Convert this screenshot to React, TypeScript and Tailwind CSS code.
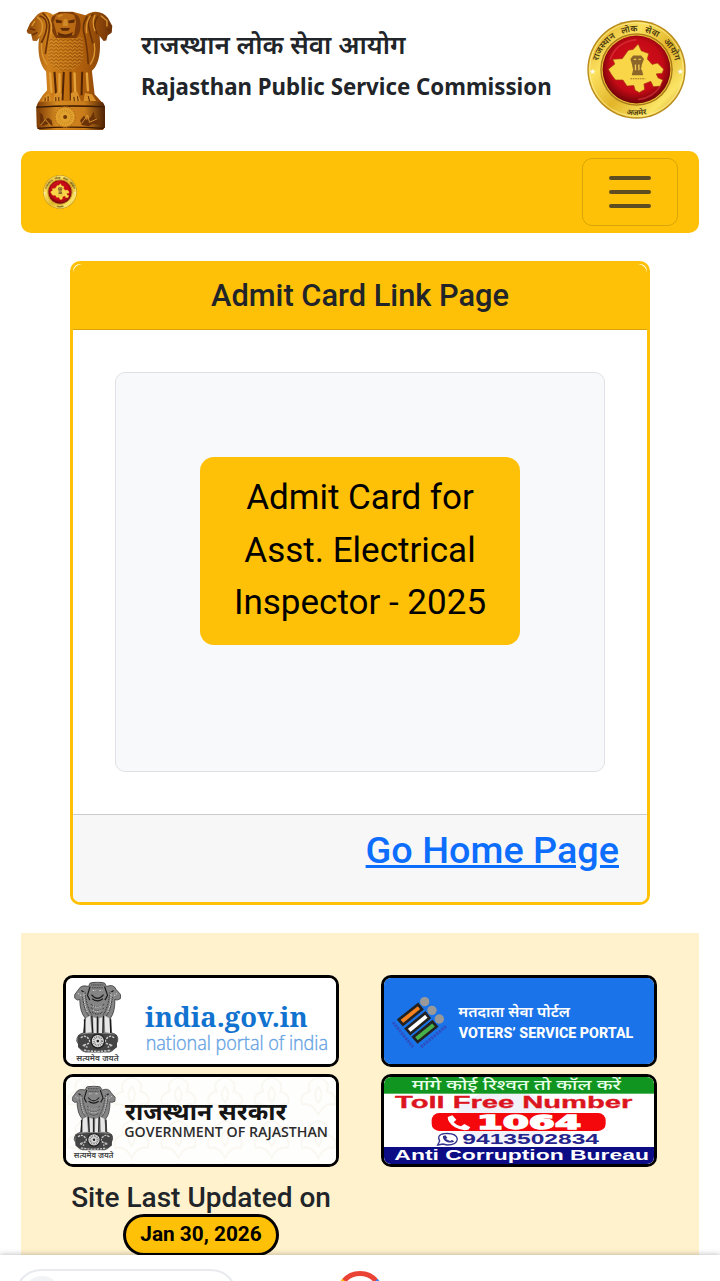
import React, { useState } from "react";

const sansHindi = "Noto Sans, Noto Sans Devanagari, sans-serif";

function GoldEmblem() {
  return (
    <svg viewBox="50 30 260 362" className="h-[121px] w-[87px]">
      <defs>
        <linearGradient id="gold" x1="0" x2="1">
          <stop offset="0" stopColor="#8a4508" />
          <stop offset=".25" stopColor="#d0811c" />
          <stop offset=".45" stopColor="#c2700f" />
          <stop offset=".7" stopColor="#a8590b" />
          <stop offset="1" stopColor="#6e3206" />
        </linearGradient>
        <linearGradient id="goldBase" x1="0" x2="1">
          <stop offset="0" stopColor="#7a3a07" />
          <stop offset=".3" stopColor="#d58a20" />
          <stop offset=".7" stopColor="#c97c1a" />
          <stop offset="1" stopColor="#4c2105" />
        </linearGradient>
        <pattern id="fur" width="14" height="10" patternUnits="userSpaceOnUse">
          <path d="M0 2L7 8L14 2" fill="none" stroke="#e8a53a" strokeWidth="2" />
          <path d="M0 6L7 12L14 6M0 -4L7 2L14 -4" fill="none" stroke="#6b3205" strokeWidth="1.6" />
        </pattern>
      </defs>
      <path
        fill="url(#gold)"
        d="M80 48L62 70 52 92 55 100 65 102 70 122 82 123 90 112C84 140 86 190 110 214L113 270 100 285 88 304 81 320 83 382 90 389 280 389 286 380 286 320 277 306 255 282 247 212C270 192 274 150 270 108L282 123 290 121 294 106 306 98 308 78 295 54C278 32 250 29 228 46L190 35 150 35 130 44C110 30 90 35 80 48Z"
      />
      <path fill="url(#fur)" d="M120 112C135 105 150 118 170 118 190 118 205 105 220 112L222 175C210 200 190 212 168 212 148 212 128 205 116 180Z" />
      <path fill="#7b3a07" d="M128 50C120 65 126 100 140 114L200 114C215 98 218 65 206 48L190 36 150 36Z" />
      <path fill="#b96a13" d="M140 44Q166 34 194 44L200 66 194 104 168 114 142 104 132 66Z" />
      <path fill="#5e2b06" d="M138 58L158 62 156 70 140 68ZM176 62L196 58 194 68 178 70ZM152 84L182 84 176 92 158 92ZM144 96Q168 110 190 96L186 108 168 114 148 108Z" />
      <path fill="#d08a28" d="M163 58L173 58 176 78 160 78ZM145 46L160 42 160 48 146 52Z" />
      <path fill="none" stroke="#6d3306" strokeWidth="5" strokeLinecap="round" d="M92 48Q112 55 112 76T96 128M101 40Q125 58 119 92T108 160M232 50Q216 75 224 102T236 190M250 42Q232 58 238 84T250 130M264 50Q248 72 262 100M64 86L76 90M70 104L82 98M292 88L304 92" />
      <path fill="none" stroke="#dc9631" strokeWidth="4" strokeLinecap="round" d="M84 52Q100 62 99 82T88 108M112 44Q132 66 125 102M96 130Q94 165 112 192M242 48Q228 68 231 98M256 46Q246 66 256 92M254 130Q260 165 243 192M275 48L292 62 292 78M68 76L76 64" />
      <path fill="none" stroke="#522405" strokeWidth="6" d="M135 215L140 285M163 215L159 300M183 215L184 300M218 215L216 285" />
      <path fill="none" stroke="#e5a23a" strokeWidth="7" strokeLinecap="round" d="M122 220L126 275M150 222L150 275M195 220L197 275M232 220L235 270" />
      <path fill="#db9129" d="M131 302Q132 278 145 276L157 280 155 304ZM184 304L184 278 203 274 214 302ZM98 302Q102 286 120 280L125 303ZM222 302L226 278 247 282 260 302Z" />
      <path fill="none" stroke="#5e2a06" strokeWidth="3" d="M139 290V304M148 290V304M193 290L195 304M204 288L206 304M107 292V303M116 288V303M236 288L240 303" />
      <path fill="url(#goldBase)" d="M86 306Q182 299 280 306L286 318Q184 313 81 320Z" />
      <path fill="url(#goldBase)" d="M81 323Q184 315 286 322V382L270 388H92L82 380Z" />
      <path fill="none" stroke="#3c1a04" strokeWidth="4" d="M81 321Q184 314 286 320M84 384Q180 377 282 384" />
      <circle cx="167" cy="350" r="30" fill="#e2a02d" stroke="#b87019" strokeWidth="4" strokeDasharray="5 3" />
      <circle cx="167" cy="350" r="19" fill="none" stroke="#c98a25" strokeWidth="8" strokeDasharray="2 4" />
      <circle cx="167" cy="350" r="6" fill="#70390a" />
      <path fill="#6b3107" d="M90 336L100 344 104 362 116 352 126 360 130 376 118 370 100 376 92 370ZM212 360L224 346 230 360 244 350 252 334 256 352 270 360 276 374 250 370 238 378 216 374Z" />
      <path fill="none" stroke="#e0a03a" strokeWidth="2.5" d="M94 374L108 358 122 374M216 370L234 344 240 366 262 356" />
    </svg>
  );
}

// Line-art capital used by both government banners
function InkEmblem({ x, y, w, h }: { x: number; y: number; w: number; h: number }) {
  return (
    <svg x={x} y={y} width={w} height={h} viewBox="0 0 140 240" preserveAspectRatio="none">
      <path
        fill="#858585"
        stroke="#222"
        strokeWidth="2"
        d="M48 4Q70-3 91 4L97 14Q118 6 125 22L139 38 138 50 128 54 122 52Q122 90 109 106L112 150Q134 154 130 174L126 182Q124 200 106 206H34Q16 202 13 182L8 174Q8 154 28 150L33 106Q18 90 17 52L10 54 2 48 2 38 14 22Q22 8 43 14Z"
      />
      <path fill="#e6e6e6" d="M36 106L48 100 52 148 34 150ZM57 104L67 106 67 150 58 150ZM75 106L84 104 84 150 74 150ZM91 100L104 106 108 150 93 148Z" />
      <path fill="none" stroke="#1b1b1b" strokeWidth="3.5" d="M53 100L56 150M88 100L86 150M70 102V150M31 110L32 150M109 110V150M48 14L40 40 47 54M91 14L100 40 92 54M52 38Q70 60 88 38M54 50Q70 62 86 50M22 26L34 34M118 26L106 34" />
      <path fill="none" stroke="#333" strokeWidth="3" strokeDasharray="3 2" d="M26 45Q30 85 44 100M34 40Q40 80 54 98M114 45Q110 85 96 100M106 40Q100 80 86 98M50 66Q70 82 90 66M50 76Q70 94 90 76M54 88Q70 102 86 88M52 10H88M54 18H86" />
      <path fill="none" stroke="#d6d6d6" strokeWidth="3" strokeDasharray="4 3" d="M30 30Q28 62 40 90M110 30Q112 62 100 90M56 26H64M76 26H84M56 70Q70 80 84 70M56 82Q70 92 84 82M12 34L22 42M128 34L118 42" />
      <path fill="#444" d="M12 156Q70 146 128 156V192Q110 208 70 206 28 208 12 192Z" />
      <path fill="none" stroke="#ccc" strokeWidth="4" strokeDasharray="7 3" d="M20 164Q34 154 44 168T26 186L40 192M120 164Q106 154 96 168T114 186L100 192M30 200Q70 208 110 200" />
      <circle cx="71" cy="174" r="20" fill="#ddd" stroke="#222" strokeWidth="4" />
      <circle cx="71" cy="174" r="12" fill="none" stroke="#666" strokeWidth="7" strokeDasharray="2 3" />
      <circle cx="71" cy="174" r="4" fill="#222" />
      <text x="7" y="233" fontSize="25" fontWeight="600" fontFamily={sansHindi} fill="#444" textLength="126" lengthAdjust="spacingAndGlyphs">
        सत्यमेव जयते
      </text>
    </svg>
  );
}

function Seal({ id, className }: { id: string; className: string }) {
  return (
    <svg viewBox="54 33 292 292" className={className}>
      <defs>
        <linearGradient id={`${id}-ring`} x1="0" y1="0" x2="1" y2="1">
          <stop offset="0" stopColor="#d9a61e" />
          <stop offset=".3" stopColor="#fbe05e" />
          <stop offset=".55" stopColor="#e2b52a" />
          <stop offset=".8" stopColor="#fbe566" />
          <stop offset="1" stopColor="#c08d12" />
        </linearGradient>
        <radialGradient id={`${id}-red`} cx=".5" cy=".45" r=".55">
          <stop offset="0" stopColor="#d8121c" />
          <stop offset=".7" stopColor="#c40a16" />
          <stop offset="1" stopColor="#6e0408" />
        </radialGradient>
        <path id={`${id}-top`} d="M83 184A117 117 0 0 1 317 184" />
        <path id={`${id}-bottom`} d="M140 300A135 135 0 0 0 260 300" />
      </defs>
      <circle cx="200" cy="179" r="145" fill="#b88a1b" />
      <circle cx="200" cy="179" r="141" fill={`url(#${id}-ring)`} />
      <circle cx="200" cy="179" r="138" fill="none" stroke="#fff0a0" strokeWidth="2" />
      <circle cx="200" cy="179" r="107" fill="#a97917" />
      <circle cx="200" cy="179" r="103" fill="#e9c13a" />
      <circle cx="200" cy="179" r="100" fill={`url(#${id}-red)`} />
      <path fill="none" stroke="#e8434a" strokeWidth="5" opacity=".5" d="M122 150Q140 98 200 91M272 225Q250 262 205 268" />
      <path
        fill="#f9d648"
        stroke="#a93a12"
        strokeWidth="2"
        d="M117 178L136 163 130 149 158 147 176 122 190 120 205 104 214 124 236 132 232 148 246 164 262 160 280 178 276 190 258 192 264 204 278 210 270 228 250 230 242 214 222 222 224 238 208 247 196 240 192 226 172 228 160 210 138 210 126 194Z"
      />
      <path fill="#8d672a" d="M190 138H214L222 148 216 164 213 180H216L220 196H186L190 180 186 162 182 148Z" />
      <path stroke="#f0cc55" strokeWidth="4" d="M197 164V181M207 164V181M192 149H199M206 149H213" />
      <path stroke="#a3722a" strokeWidth="3" strokeDasharray="5 2" d="M182 206H226" />
      <g fill="#4c390e" fontFamily={sansHindi} fontWeight="600" fontSize="26">
        <text style={{ wordSpacing: "14px" }}>
          <textPath href={`#${id}-top`} startOffset="50%" textAnchor="middle">
            राजस्थान लोक सेवा आयोग
          </textPath>
        </text>
        <text fontSize="23">
          <textPath href={`#${id}-bottom`} startOffset="50%" textAnchor="middle">
            अजमेर
          </textPath>
        </text>
      </g>
      <g fill="#fff" fontSize="22" textAnchor="middle" fontFamily="DejaVu Sans, sans-serif">
        <text x="71" y="192">★</text>
        <text x="330" y="192">★</text>
      </g>
    </svg>
  );
}

function IndiaGovBanner() {
  return (
    <svg viewBox="33 39 810 258" preserveAspectRatio="none" className="block h-full w-full bg-white">
      <InkEmblem x={57} y={50} w={141} h={246} />
      <text x="270" y="185" fontSize="82" fontWeight="700" fontFamily="Noto Serif, Liberation Serif, serif" fill="#1173cf" textLength="488" lengthAdjust="spacingAndGlyphs">
        india.gov.in
      </text>
      <text x="272" y="254" fontSize="58" fontWeight="300" fontFamily="Open Sans, Lato, sans-serif" fill="#62a1e2" stroke="#62a1e2" strokeWidth="1" textLength="547" lengthAdjust="spacingAndGlyphs">
        national portal of india
      </text>
    </svg>
  );
}

function VotersBanner() {
  return (
    <svg viewBox="27 39 810 258" preserveAspectRatio="none" className="block h-full w-full bg-[#1a73e8]">
      <g fill="#999">
        <circle cx="149" cy="110" r="14" />
        <circle cx="171" cy="136" r="14" />
        <circle cx="193" cy="162" r="14" />
      </g>
      <g stroke="#222" strokeWidth="8">
        <path fill="#f58220" d="M129 118L141 133 84 179 71 164Z" />
        <path fill="#fff" d="M151 144L163 159 106 206 93 191Z" />
        <path fill="#46b04a" d="M172 170L185 185 128 231 115 216Z" />
      </g>
      <path stroke="#2f4fc0" strokeWidth="9" strokeDasharray="7 3" d="M54 172L114 246M138 246L215 182" />
      <g fill="#fff" fontWeight="700">
        <text x="250" y="155" fontSize="45" fontWeight="600" fontFamily={sansHindi} textLength="335" lengthAdjust="spacingAndGlyphs">
          मतदाता सेवा पोर्टल
        </text>
        <text x="251" y="218" fontSize="42" fontWeight="800" fontFamily="Roboto, sans-serif" textLength="524" lengthAdjust="spacingAndGlyphs">
          VOTERS’ SERVICE PORTAL
        </text>
      </g>
    </svg>
  );
}

function RajasthanBanner() {
  return (
    <svg viewBox="33 27 810 261" preserveAspectRatio="none" className="block h-full w-full bg-[#fefefd]">
      <defs>
        <pattern id="motif" x="20" y="20" width="140" height="130" patternUnits="userSpaceOnUse">
          <path fill="none" stroke="#f8f6ee" strokeWidth="5" d="M70 8Q110 20 95 50 130 60 118 90 90 80 70 120 50 80 22 90 10 60 45 50 30 20 70 8ZM70 36Q90 60 70 84 50 60 70 36Z" />
        </pattern>
      </defs>
      <rect x="33" y="27" width="810" height="261" fill="url(#motif)" />
      <InkEmblem x={50} y={53} w={132} h={224} />
      <text x="210" y="157" fontSize="72" fontWeight="700" fontFamily={sansHindi} fill="#151515" textLength="484" lengthAdjust="spacingAndGlyphs">
        राजस्थान सरकार
      </text>
      <text x="208" y="206" fontSize="44" fontWeight="600" fontFamily="Open Sans, Noto Sans, sans-serif" fill="#2c2c2c" textLength="611" lengthAdjust="spacingAndGlyphs">
        GOVERNMENT OF RAJASTHAN
      </text>
    </svg>
  );
}

function TollFreeBanner() {
  return (
    <svg viewBox="27 27 810 261" preserveAspectRatio="none" className="block h-full w-full bg-white">
      <ellipse cx="390" cy="150" rx="150" ry="82" fill="#f1f1fa" />
      <rect x="27" y="27" width="810" height="50" fill="#109620" />
      <rect x="27" y="237" width="810" height="51" fill="#0c0c84" />
      <text x="110" y="66" fontSize="42" fontWeight="500" fontFamily={sansHindi} fill="#e8ffe8" textLength="628" lengthAdjust="spacingAndGlyphs">
        मांगे कोई रिश्वत तो कॉल करें
      </text>
      <rect x="170" y="135" width="522" height="54" rx="22" fill="#f5080c" />
      <g fontFamily="Liberation Sans, Arial, sans-serif" fontWeight="700">
        <text x="60" y="121" fontSize="48" fill="#dc1420" stroke="#dc1420" textLength="712" lengthAdjust="spacingAndGlyphs">
          Toll Free Number
        </text>
        <text x="262" y="229" fontSize="45" fill="#25258c" textLength="410" lengthAdjust="spacingAndGlyphs">
          9413502834
        </text>
        <text x="58" y="277" fontSize="45" fill="#fff" textLength="764" lengthAdjust="spacingAndGlyphs">
          Anti Corruption Bureau
        </text>
      </g>
      <text x="305" y="183" fontSize="58" fontWeight="700" fontFamily="DejaVu Sans, sans-serif" fill="#fff" stroke="#fff" strokeWidth="4" textLength="313" lengthAdjust="spacingAndGlyphs">
        1064
      </text>
      <path fill="#fff" d="M218 147L232 142 244 155 236 163Q244 172 258 175L268 168 286 178 280 185Q262 190 240 178 218 164 218 147Z" />
      <path fill="#fff" stroke="#34348f" strokeWidth="4" d="M188 231L194 219Q184 200 208 197 244 194 247 213 246 231 216 231L204 228Z" />
      <path fill="#34348f" d="M204 204L211 202 217 209 213 213 225 219 231 216 238 220Q230 227 214 221 202 214 204 204Z" />
    </svg>
  );
}

const portals = [
  { name: "National Portal of India", banner: <IndiaGovBanner /> },
  { name: "Voters Service Portal", banner: <VotersBanner /> },
  { name: "Government of Rajasthan", banner: <RajasthanBanner /> },
  { name: "Anti Corruption Bureau", banner: <TollFreeBanner /> },
];

export default function App() {
  const [menuOpen, setMenuOpen] = useState(false);

  return (
    <div className="relative h-[1281px] w-[720px] overflow-hidden bg-white font-['Roboto',sans-serif] text-[#212529]">
      {/* Header */}
      <header className="flex h-[151px] items-start pl-[26px] pr-[34px] pt-[10px]">
        <GoldEmblem />
        <div className="ml-[28px] flex-1 whitespace-nowrap pt-[13px] font-['Noto_Sans','Noto_Sans_Devanagari',sans-serif]">
          <h1 className="text-[26px] font-semibold leading-[42px]">राजस्थान लोक सेवा आयोग</h1>
          <h2 className="text-[22.25px] font-bold leading-[44px]">Rajasthan Public Service Commission</h2>
        </div>
        <Seal id="seal" className="mt-[10px] h-[99px] w-[99px]" />
      </header>

      {/* Navbar */}
      <nav className="mx-[21px] flex h-[82px] items-center justify-between rounded-[10px] bg-[#ffc107] px-[21px]">
        <Seal id="brand" className="ml-px h-[34px] w-[34px]" />
        <button
          type="button"
          aria-label="Toggle navigation"
          aria-expanded={menuOpen}
          onClick={() => setMenuOpen(!menuOpen)}
          className="flex h-[68px] w-[96px] flex-col items-center justify-center gap-[10px] rounded-[10px] border border-black/15"
        >
          <span className="h-[4px] w-[42px] rounded-full bg-[#5f4d22]" />
          <span className="h-[4px] w-[42px] rounded-full bg-[#5f4d22]" />
          <span className="h-[4px] w-[42px] rounded-full bg-[#5f4d22]" />
        </button>
      </nav>

      {/* Admit card */}
      <main className="mx-[70px] mt-[28px] flex h-[644px] flex-col overflow-hidden rounded-[10px] border-[3px] border-[#ffc107] bg-white">
        <div className="flex h-[66px] items-center justify-center rounded-t-[9px] border-b border-[#d9a406] bg-[#ffc107]">
          <h3 className="text-[30.8px] font-medium">Admit Card Link Page</h3>
        </div>
        <div className="flex-1 p-[42px]">
          <div className="flex h-[400px] items-start justify-center rounded-[10px] border border-[#dee2e6] bg-[#f8f9fa] pt-[84px]">
            <a href="#" className="flex h-[188px] w-[320px] items-center justify-center rounded-[14px] bg-[#ffc107] text-center text-[35px] leading-[52.5px] text-black">
              Admit Card for
              <br />
              Asst. Electrical
              <br />
              Inspector - 2025
            </a>
          </div>
        </div>
        <div className="flex h-[88px] justify-end border-t border-[#cacbcb] bg-[#f7f7f7] pr-[28px] pt-[12px]">
          <a href="#" className="text-[37.8px] font-medium leading-[46px] text-[#0d6efd] underline">
            Go Home Page
          </a>
        </div>
      </main>

      {/* Footer */}
      <footer className="mx-[21px] mt-[28px] h-[348px] bg-[#fff2cd] px-[42px] pt-[42px]">
        <div className="grid grid-cols-2 grid-rows-[92px_93px] gap-x-[42px] gap-y-[7px]">
          {portals.map((portal) => (
            <a key={portal.name} href="#" aria-label={portal.name} className="overflow-hidden rounded-[10px] border-[3px] border-black">
              {portal.banner}
            </a>
          ))}
        </div>
        <div className="mt-[13px] flex w-[276px] flex-col items-center whitespace-nowrap">
          <p className="pt-px text-[28px] font-medium leading-[33px]">Site Last Updated on</p>
          <span className="flex h-[42px] w-[156px] items-center justify-center rounded-full border-[3px] border-black bg-[#ffc107] text-[20.8px] font-bold text-black">
            Jan 30, 2026
          </span>
        </div>
      </footer>

      {/* Browser bar */}
      <div className="absolute inset-x-0 bottom-0 flex h-[26px] items-start overflow-hidden bg-white pl-[15px] pt-[14px] shadow-[0_0_6px_rgba(0,0,0,0.3)]">
        <div className="h-[52px] w-[222px] shrink-0 rounded-full border-2 border-[#e8eaee] pl-[6px] pt-[5px]">
          <div className="h-[38px] w-[38px] rounded-full bg-[#f1f3f4]" />
        </div>
        <svg viewBox="0 0 48 48" className="ml-[99px] mt-[2px] h-[48px] w-[48px] shrink-0" fill="none" strokeWidth="5">
          <path stroke="#ea4335" d="M7.6 10.2A21.5 21.5 0 0 1 40.4 10.2" />
          <path stroke="#fbbc04" d="M2.5 24A21.5 21.5 0 0 1 8.2 9.4" />
          <path stroke="#4285f4" d="M39.8 9.4A21.5 21.5 0 0 1 45.5 24" />
        </svg>
      </div>
    </div>
  );
}
